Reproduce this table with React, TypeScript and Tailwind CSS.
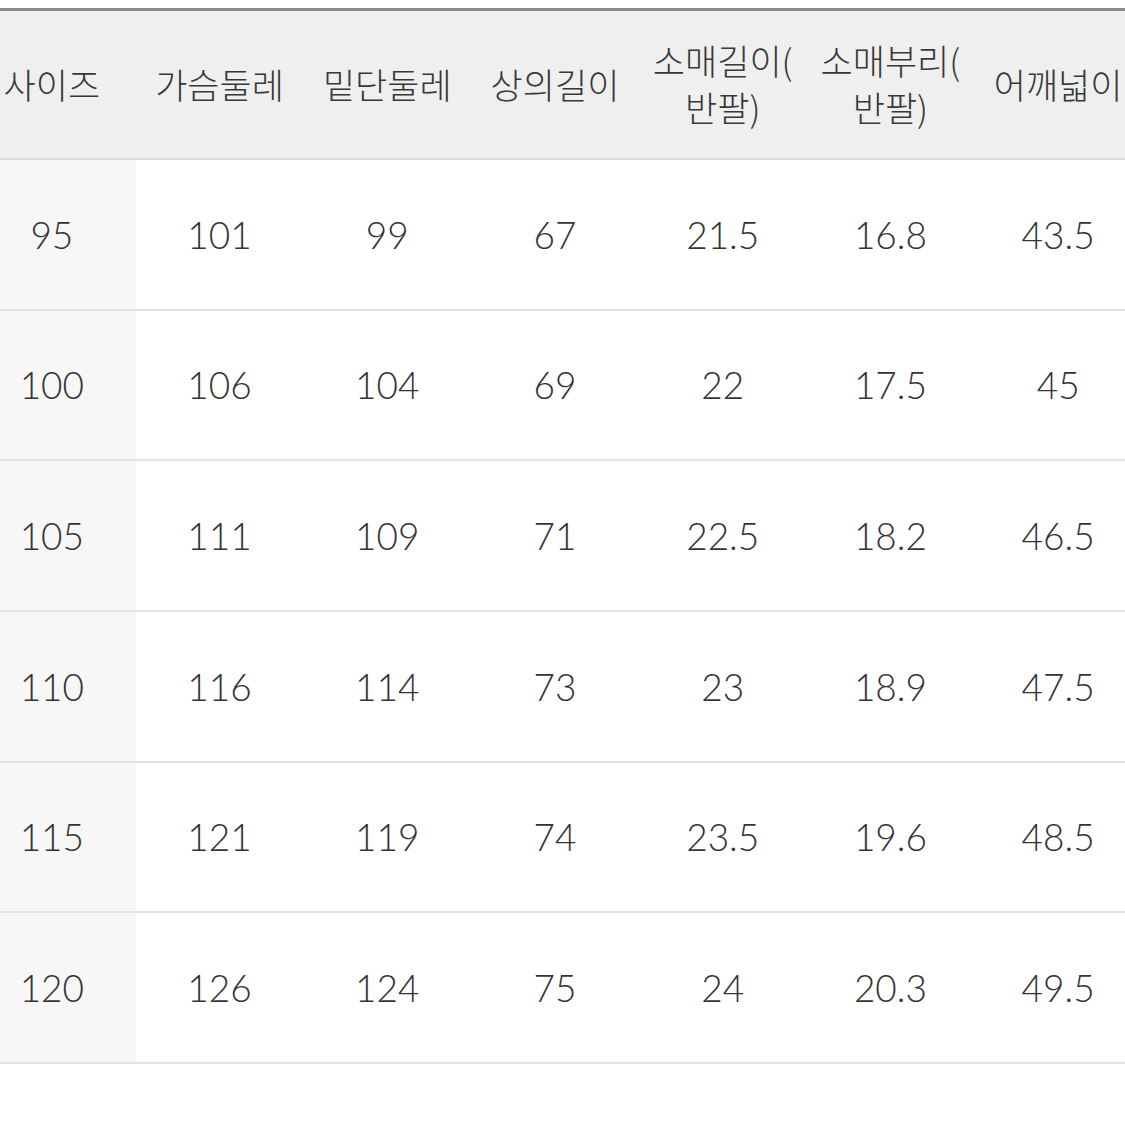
const headers: string[][] = [
  ["사이즈"],
  ["가슴둘레"],
  ["밑단둘레"],
  ["상의길이"],
  ["소매길이(", "반팔)"],
  ["소매부리(", "반팔)"],
  ["어깨넓이"],
];

const rows: string[][] = [
  ["95", "101", "99", "67", "21.5", "16.8", "43.5"],
  ["100", "106", "104", "69", "22", "17.5", "45"],
  ["105", "111", "109", "71", "22.5", "18.2", "46.5"],
  ["110", "116", "114", "73", "23", "18.9", "47.5"],
  ["115", "121", "119", "74", "23.5", "19.6", "48.5"],
  ["120", "126", "124", "75", "24", "20.3", "49.5"],
];

export default function App() {
  return (
    <main className="w-[1125px] h-[1125px] bg-white overflow-hidden pt-[8px]">
      <div className="ml-[-32px] w-[1174px]">
        {/* header */}
        <div className="grid grid-cols-7 h-[152px] bg-[#efefef] border-t-[3px] border-t-[#8c8c8c] border-b-2 border-b-[#dcdcdc] items-center pb-[3px] font-['Noto_Sans_CJK_KR',sans-serif] font-light text-[35px] leading-[47px] text-[#383838]">
          {headers.map((lines, i) => (
            <div key={i} className="text-center whitespace-nowrap">
              {lines.map((l, j) => (
                <div key={j}>{l}</div>
              ))}
            </div>
          ))}
        </div>

        {/* body */}
        {rows.map((row, r) => (
          <div
            key={r}
            className="grid grid-cols-7 h-[150.7px] border-b-2 border-[#e3e3e3] font-['Lato',sans-serif] font-light text-[37px] text-[#333]"
          >
            {row.map((v, c) => (
              <div
                key={c}
                className={
                  c === 0
                    ? "flex items-center justify-center bg-[#f7f7f7]"
                    : "flex items-center justify-center"
                }
              >
                {v}
              </div>
            ))}
          </div>
        ))}
      </div>
    </main>
  );
}
